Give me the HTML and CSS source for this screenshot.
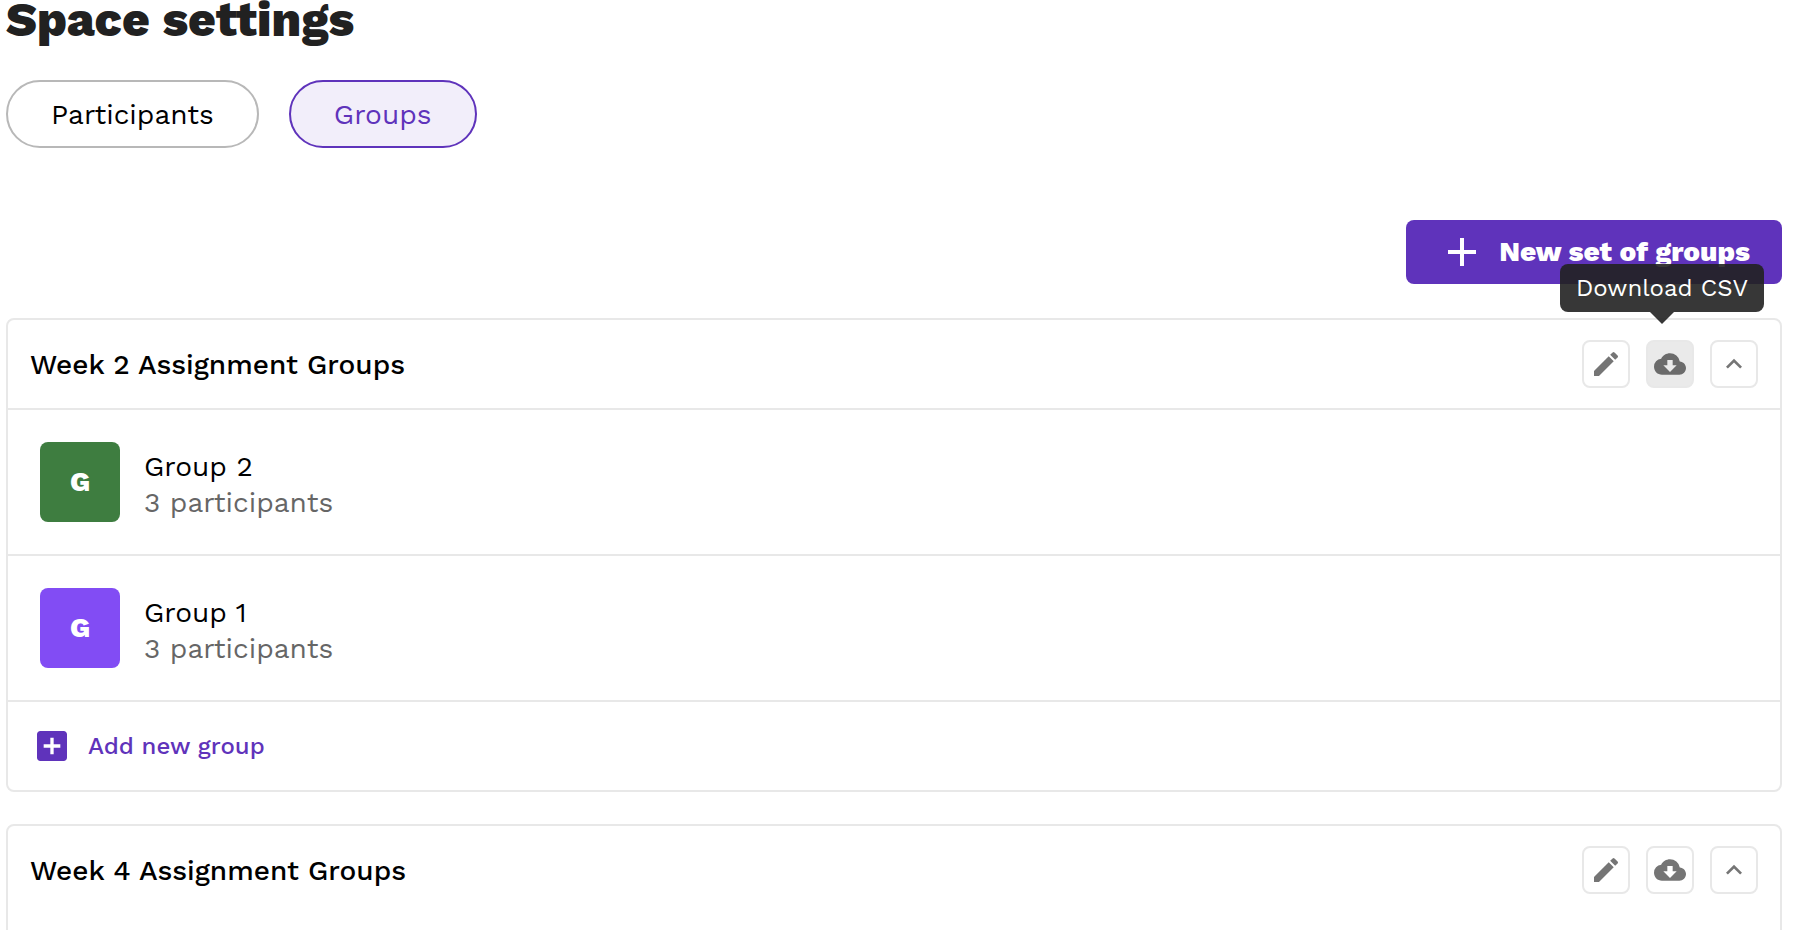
FILE: index.html
```
<!DOCTYPE html>
<html lang="en">
<head>
    <meta charset="UTF-8">
    <meta name="viewport" content="width=device-width, initial-scale=1.0">
    <title>Space settings</title>
    <link rel="stylesheet" href="styles.css">
</head>
<body>
    <main class="page">
        <h1>Space settings</h1>

        <nav class="tabs">
            <button class="tab" type="button">Participants</button>
            <button class="tab active" type="button">Groups</button>
        </nav>

        <div class="toolbar">
            <button class="new-set" type="button">
                <svg viewBox="0 0 24 24" width="48" height="48"><path d="M19 13h-6v6h-2v-6H5v-2h6V5h2v6h6v2z"/></svg>
                New set of groups
            </button>
        </div>

        <section class="card">
            <header class="card-header">
                <h2>Week 2 Assignment Groups</h2>
                <div class="actions">
                    <button class="icon-btn" type="button" aria-label="Edit">
                        <svg viewBox="0 0 24 24"><path d="M3 17.25V21h3.75L17.81 9.94l-3.75-3.75L3 17.25zM20.71 7.04a1 1 0 0 0 0-1.41l-2.34-2.34a1 1 0 0 0-1.41 0l-1.83 1.83 3.75 3.75 1.83-1.83z"/></svg>
                    </button>
                    <div class="tooltip-wrap">
                        <button class="icon-btn hovered" type="button" aria-label="Download" aria-describedby="csv-tip">
                            <svg viewBox="0 0 24 24"><path d="M19.35 10.04A7.49 7.49 0 0 0 12 4C9.11 4 6.6 5.64 5.35 8.04A5.994 5.994 0 0 0 0 14c0 3.31 2.69 6 6 6h13c2.76 0 5-2.24 5-5 0-2.64-2.05-4.78-4.65-4.96zM17 13l-5 5-5-5h3V9h4v4h3z"/></svg>
                        </button>
                        <span class="tooltip" id="csv-tip" role="tooltip">Download CSV</span>
                    </div>
                    <button class="icon-btn" type="button" aria-label="Collapse">
                        <svg viewBox="0 0 24 24"><path d="M7.41 15.41L12 10.83l4.59 4.58L18 14l-6-6-6 6z"/></svg>
                    </button>
                </div>
            </header>
            <ul class="groups">
                <li class="group">
                    <span class="avatar green">G</span>
                    <div class="group-info">
                        <div class="group-name">Group 2</div>
                        <div class="group-count">3 participants</div>
                    </div>
                </li>
                <li class="group">
                    <span class="avatar violet">G</span>
                    <div class="group-info">
                        <div class="group-name">Group 1</div>
                        <div class="group-count">3 participants</div>
                    </div>
                </li>
            </ul>
            <button class="add-group" type="button">
                <svg viewBox="0 0 24 24" width="40" height="40"><path d="M19 3H5c-1.11 0-2 .9-2 2v14c0 1.1.89 2 2 2h14c1.1 0 2-.9 2-2V5c0-1.1-.9-2-2-2zm-2 10h-4v4h-2v-4H7v-2h4V7h2v4h4v2z"/></svg>
                Add new group
            </button>
        </section>

        <section class="card empty">
            <header class="card-header">
                <h2>Week 4 Assignment Groups</h2>
                <div class="actions">
                    <button class="icon-btn" type="button" aria-label="Edit">
                        <svg viewBox="0 0 24 24"><path d="M3 17.25V21h3.75L17.81 9.94l-3.75-3.75L3 17.25zM20.71 7.04a1 1 0 0 0 0-1.41l-2.34-2.34a1 1 0 0 0-1.41 0l-1.83 1.83 3.75 3.75 1.83-1.83z"/></svg>
                    </button>
                    <button class="icon-btn" type="button" aria-label="Download">
                        <svg viewBox="0 0 24 24"><path d="M19.35 10.04A7.49 7.49 0 0 0 12 4C9.11 4 6.6 5.64 5.35 8.04A5.994 5.994 0 0 0 0 14c0 3.31 2.69 6 6 6h13c2.76 0 5-2.24 5-5 0-2.64-2.05-4.78-4.65-4.96zM17 13l-5 5-5-5h3V9h4v4h3z"/></svg>
                    </button>
                    <button class="icon-btn" type="button" aria-label="Collapse">
                        <svg viewBox="0 0 24 24"><path d="M7.41 15.41L12 10.83l4.59 4.58L18 14l-6-6-6 6z"/></svg>
                    </button>
                </div>
            </header>
        </section>
    </main>
</body>
</html>
```
FILE: styles.css
```
* {
    box-sizing: border-box;
}
body {
    margin: 0;
    background-color: #fff;
    color: #000;
    font-family: "Work Sans", Inter, sans-serif;
    font-size: 28px;
    line-height: 36px;
}
button {
    font: inherit;
    color: inherit;
    background: none;
    border: none;
    padding: 0;
    cursor: pointer;
}
svg {
    display: block;
    flex: none;
    fill: currentColor;
}
.page {
    height: 100vh;
    overflow: hidden;
    padding: 0 26px 0 6px;
}
h1 {
    margin: 0 0 40px;
    color: #212121;
    font-size: 48px;
    font-weight: 800;
    line-height: 40px;
}
.tabs {
    display: flex;
    gap: 30px;
    margin-bottom: 72px;
}
.tab {
    height: 68px;
    padding: 2px 43px 0;
    border: 2px solid #b8b8b8;
    border-radius: 34px;
}
.tab.active {
    background-color: #f2eefa;
    border-color: #5f33bb;
    color: #5f33bb;
}
.toolbar {
    display: flex;
    justify-content: flex-end;
    margin-bottom: 34px;
}
.new-set {
    display: flex;
    align-items: center;
    gap: 13px;
    padding: 8px 32px;
    background-color: #5f33bb;
    border-radius: 8px;
    color: #fff;
    font-weight: 800;
}
.card {
    margin-bottom: 32px;
    border: 2px solid #e8e8e8;
    border-radius: 8px;
}
.card.empty {
    min-height: 144px;
}
.card-header {
    display: flex;
    align-items: center;
    justify-content: space-between;
    padding: 20px 22px;
}
h2 {
    margin: 0;
    padding-top: 2px;
    font-size: 28px;
    font-weight: 500;
}
.actions {
    display: flex;
    gap: 16px;
}
.icon-btn {
    display: flex;
    align-items: center;
    justify-content: center;
    width: 48px;
    height: 48px;
    border: 2px solid #e8e8e8;
    border-radius: 8px;
    color: #757575;
}
.icon-btn svg {
    width: 32px;
    height: 32px;
}
.icon-btn.hovered {
    background-color: #eaeaea;
    color: #6b6b6b;
}
.tooltip-wrap {
    position: relative;
}
.tooltip {
    position: absolute;
    right: -70px;
    bottom: 76px;
    width: 204px;
    background-color: rgba(33, 33, 33, 0.9);
    border-radius: 8px;
    color: #fff;
    font-size: 24px;
    line-height: 48px;
    text-align: center;
    white-space: nowrap;
}
.tooltip::after {
    content: "";
    position: absolute;
    top: 100%;
    left: 50%;
    margin-left: -12px;
    border: 12px solid transparent;
    border-top-color: rgba(33, 33, 33, 0.9);
    border-bottom: none;
}
.groups {
    margin: 0;
    padding: 0;
    list-style: none;
}
.group {
    display: flex;
    align-items: center;
    gap: 24px;
    padding: 32px;
    border-top: 2px solid #e8e8e8;
}
.group-info {
    padding-top: 6px;
}
.avatar {
    width: 80px;
    border-radius: 8px;
    color: #fff;
    font-weight: 800;
    line-height: 80px;
    text-align: center;
}
.green {
    background-color: #3e7d40;
}
.violet {
    background-color: #824cf4;
}
.group-count {
    color: #666;
}
.add-group {
    display: flex;
    align-items: center;
    gap: 16px;
    width: 100%;
    padding: 24px;
    border-top: 2px solid #e8e8e8;
    color: #5f33bb;
    font-size: 24px;
    font-weight: 500;
    line-height: 40px;
}
```
